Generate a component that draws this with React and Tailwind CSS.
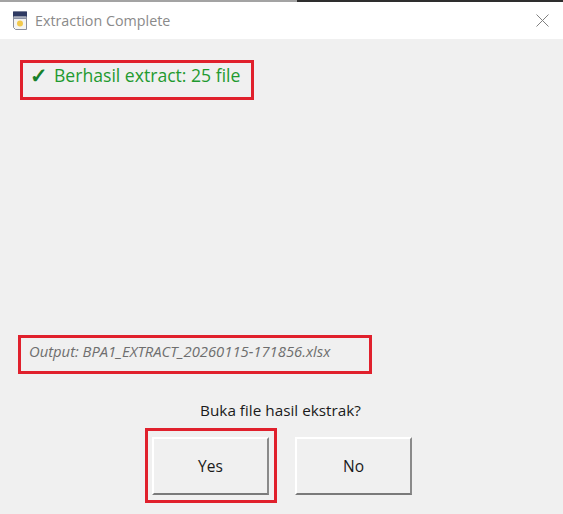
function AppIcon() {
  return (
    <svg width="16" height="20" viewBox="0 0 16 20" className="shrink-0">
      <path d="M1.5 1h13v17.5h-11l-2-2z" fill="#f4f4f2" stroke="#8b8f9c" strokeWidth="1" />
      <rect x="1" y="0.5" width="14" height="5" fill="#2f3a63" />
      <rect x="2" y="6.5" width="12" height="1.2" fill="#5d6684" />
      <circle cx="8" cy="12.5" r="3" fill="#f2c94c" />
    </svg>
  );
}

function CloseIcon() {
  return (
    <svg width="13" height="13" viewBox="0 0 13 13" className="ml-auto shrink-0">
      <path d="M0.5 0.5l12 12M12.5 0.5l-12 12" stroke="#808080" strokeWidth="1" fill="none" />
    </svg>
  );
}

function DialogButton({ children }) {
  return (
    <button className="w-[117px] h-[58px] pt-[2px] bg-[#f0f0f0] text-[15.5px] text-[#1a1a1a] border-t-2 border-l-2 border-t-white border-l-white border-r-2 border-b-2 border-r-[#8a8a8a] border-b-[#7a7a7a]">
      {children}
    </button>
  );
}

export default function App() {
  return (
    <div className="w-[563px] h-[514px] flex flex-col overflow-hidden bg-[#f0f0f0] font-['Open_Sans','Noto_Sans',sans-serif]">
      <div className="flex h-[2px] shrink-0">
        <div className="w-[297px] bg-[#a3a3a3]" />
        <div className="flex-1 bg-[#2e2e2e]" />
      </div>
      <div className="h-[37px] shrink-0 bg-white flex items-center pl-[12px] pr-[14px]">
        <AppIcon />
        <span className="ml-[7px] text-[14.3px] text-[#8a8a8a]">Extraction Complete</span>
        <CloseIcon />
      </div>

      <div className="flex-1 flex flex-col">
        <div className="mt-[21px] ml-[20px] w-[234px] h-[40px] border-[3px] border-[#e0202c] flex items-start pl-[7px] text-[17.6px] leading-[24px] text-[#1f9a2f]">
          <span className="w-[24px] shrink-0 text-[21px] font-bold leading-[24px] text-[#17802a]">✓</span>
          <span>Berhasil extract: 25 file</span>
        </div>

        <div className="mt-[235px] ml-[18px] w-[354px] h-[39px] border-[3px] border-[#e0202c] pl-[8px] text-[14.8px] leading-[26px] italic text-[#6e6e6e]">
          Output: BPA1_EXTRACT_20260115-171856.xlsx
        </div>

        <p className="mt-[26px] pr-[2px] h-[20px] text-center text-[15.3px] leading-[20px] text-[#1a1a1a]">Buka file hasil ekstrak?</p>

        <div className="mt-[8px] ml-[145px] flex items-center">
          <div className="w-[132px] h-[75px] border-[3px] border-[#e0202c] flex items-center pl-[4px]">
            <DialogButton>Yes</DialogButton>
          </div>
          <div className="ml-[18px]">
            <DialogButton>No</DialogButton>
          </div>
        </div>
      </div>
    </div>
  );
}
